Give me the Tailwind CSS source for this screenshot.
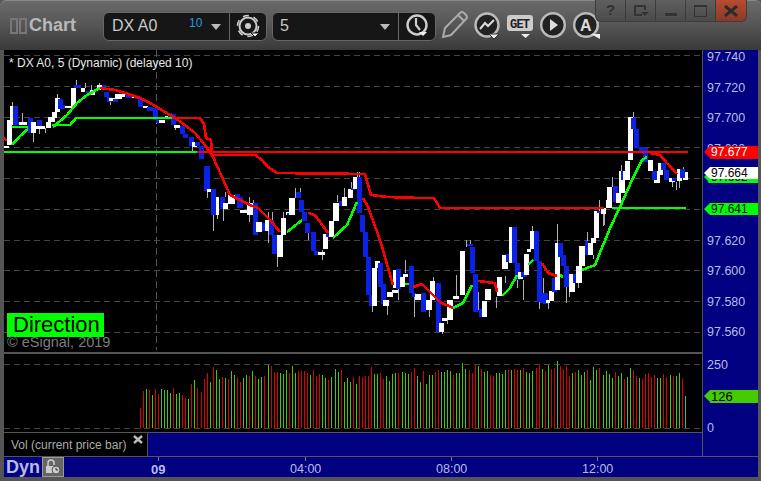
<!DOCTYPE html>
<html lang="en">
<head>
<meta charset="UTF-8">
<title>Chart</title>
<script src="https://cdn.jsdelivr.net/npm/@tailwindcss/browser@4"></script>
</head>
<body class="w-[761px] h-[481px] overflow-hidden bg-[#555] font-['Liberation_Sans',Arial,sans-serif]">

<!-- title bar and toolbar -->
<header class="relative h-[50px] rounded-t-md flex items-center bg-gradient-to-b from-[#6a6a6a] via-[#555] to-[#3a3a3a] border-t border-[#888]">
  <div class="flex gap-px ml-[10px] w-[17px] h-[16px] mt-[1px]">
    <span class="w-[8px] h-full border-2 border-[#777]"></span>
    <span class="w-[8px] h-full border-2 border-[#777]"></span>
  </div>
  <span class="ml-[2px] text-[18px] font-bold text-[#b8b8b8]">Chart</span>

  <div class="ml-[27px] flex w-[164px] h-[29px] mt-[1px] rounded-md border border-[#666] bg-[#161616]">
    <div class="relative flex-1 flex items-center pl-[8px] text-[16px] text-[#c8c8c8]">
      DX A0
      <span class="absolute left-[85px] top-[1px] text-[12px] text-[#1e9ce0]">10</span>
      <span class="absolute left-[107px] top-[11px] w-0 h-0 border-x-[5px] border-x-transparent border-t-[6px] border-t-[#bbb]"></span>
    </div>
    <div class="w-[37px] border-l border-[#666] flex items-center justify-center">
      <svg width="26" height="26" viewBox="0 0 26 26" fill="none">
        <circle cx="13" cy="13" r="8.500" stroke="#ccc" stroke-width="2"/>
        <circle cx="13" cy="13" r="10.500" stroke="#ccc" stroke-width="1.600" stroke-dasharray="6 5"/>
        <circle cx="13" cy="13" r="3" fill="#ccc"/>
        <path d="M16 20 h8 l-4 4 z" fill="#eee" stroke="#161616"/>
      </svg>
    </div>
  </div>

  <div class="ml-[5px] flex w-[164px] h-[29px] mt-[1px] rounded-md border border-[#666] bg-[#161616]">
    <div class="relative flex-1 flex items-center pl-[7px] text-[16px] text-[#c8c8c8]">
      5
      <span class="absolute left-[107px] top-[11px] w-0 h-0 border-x-[5px] border-x-transparent border-t-[6px] border-t-[#bbb]"></span>
    </div>
    <div class="w-[37px] border-l border-[#666] flex items-center justify-center">
      <svg width="26" height="26" viewBox="0 0 26 26" fill="none">
        <circle cx="13" cy="12" r="9.500" stroke="#ccc" stroke-width="2.400"/>
        <path d="M12 5 L12 12 L16 17" stroke="#ccc" stroke-width="2.200"/>
        <path d="M15 19 h8 l-4 4 z" fill="#eee"/>
      </svg>
    </div>
  </div>

  <!-- tool icons -->
  <svg class="ml-[5px] shrink-0" width="160" height="32" viewBox="0 0 160 32" fill="none">
    <path d="M2 27 L4 18 L19 3 Q21 1 23 3 L25 5 Q27 7 25 9 L10 25 Z M17 5 L23 11" stroke="#aaa" stroke-width="2"/>
    <circle cx="46" cy="15" r="11.500" fill="#222" stroke="#bbb" stroke-width="2.400"/>
    <path d="M39 19 L44 13 L47 16 L53 10" stroke="#ddd" stroke-width="2"/>
    <path d="M48 24 h10 l-5 5 z" fill="#eee" stroke="#333"/>
    <rect x="66" y="5" width="26" height="16" rx="3" fill="#ccc"/>
    <text x="69" y="18" font-size="12" font-weight="700" font-family="Liberation Mono" textLength="20" fill="#222">GET</text>
    <path d="M80 24 h9 l-4.500 4 z" fill="#eee"/>
    <circle cx="112" cy="15" r="11.800" fill="#222" stroke="#bbb" stroke-width="2.400"/>
    <path d="M109 9 L117 15 L109 21 Z" fill="#ddd"/>
    <circle cx="145" cy="15" r="11.800" fill="#222" stroke="#bbb" stroke-width="2.400"/>
    <text x="139" y="21" font-size="16" font-weight="700" font-family="Liberation Sans" fill="#ddd">A</text>
    <path d="M150 24 h9 v5 z" fill="#eee"/>
  </svg>

  <!-- window buttons -->
  <div class="absolute right-[14px] -top-px flex h-[22px] rounded-b-md overflow-hidden border border-[#3c3c3c] border-t-0 bg-gradient-to-b from-[#5f5f5f] to-[#4b4b4b]">
    <button class="w-[30px] flex items-center justify-center text-[15px] font-bold text-[#333] border-r border-[#3c3c3c]">?</button>
    <button class="w-[30px] flex items-center justify-center border-r border-[#3c3c3c]">
      <svg width="16" height="14" viewBox="0 0 16 14" fill="none"><path d="M9 11 H2 V2 H12 V6" stroke="#333" stroke-width="2"/><path d="M8 8 h8 l-4 4 z" fill="#333"/></svg>
    </button>
    <button class="w-[30px] flex items-end justify-center pb-[5px] border-r border-[#3c3c3c]"><span class="w-[12px] h-[3px] bg-[#333]"></span></button>
    <button class="w-[30px] flex items-center justify-center border-r border-[#3c3c3c]"><span class="w-[13px] h-[12px] border border-t-2 border-[#333]"></span></button>
    <button class="w-[30px] flex items-center justify-center bg-gradient-to-b from-[#b84c32] to-[#8a3a28]">
      <svg width="14" height="12" viewBox="0 0 14 12"><path d="M1 1 L13 11 M13 1 L1 11" stroke="#2b2b2b" stroke-width="3"/></svg>
    </button>
  </div>
</header>

<div class="flex pl-[4px] pr-[3px]">
  <!-- chart column -->
  <div class="w-[698px]">
    <div class="relative h-[302px] bg-black">
      <svg id="price" class="absolute inset-0" width="698" height="302" viewBox="4 50 698 302"></svg>
      <p class="absolute left-[5px] top-[5px] text-[12px] leading-[14px] text-[#e8e8e8] translate-y-px">* DX A0, 5 (Dynamic) (delayed 10)</p>
      <div class="absolute left-[3px] top-[263px] w-[97px] h-[24px] bg-[#00ff00] text-black text-[22px] leading-[24px] pl-[6px]">Direction</div>
      <p class="absolute left-[3px] top-[284px] text-[14.5px] leading-[16px] text-[#7c7c7c]">© eSignal, 2019</p>
    </div>
    <div class="h-[2px] bg-[#555]"></div>
    <svg id="volume" class="block bg-black" width="698" height="78" viewBox="4 354 698 78"></svg>
    <div class="h-[1px] bg-[#555]"></div>
    <div class="flex h-[23px] bg-black">
      <div class="relative w-[143px] text-[12px] leading-[23px] pl-[7px] pt-[1px] text-[#aaa]">
        Vol (current price bar)
        <svg class="absolute right-[4px] top-[2px]" width="10" height="9" viewBox="0 0 10 9"><path d="M1 1 L9 8 M9 1 L1 8" stroke="#bbb" stroke-width="2.400"/></svg>
      </div>
      <div class="flex-1 bg-[#000080] border-l border-[#555]"></div>
    </div>
  </div>

  <!-- price axis -->
  <div class="relative w-[56px] h-[406px] bg-[#000080] border-l border-[#555] text-[12.5px] text-[#b9bbe6]">
    <div class="pl-[4px]">
      <div class="h-[30.6px] leading-[15px]">97.740</div>
      <div class="h-[30.6px] leading-[15px]">97.720</div>
      <div class="h-[30.6px] leading-[15px]">97.700</div>
      <div class="h-[30.6px] leading-[15px]">97.680</div>
      <div class="h-[30.6px] leading-[15px]">97.660</div>
      <div class="h-[30.6px] leading-[15px]">97.640</div>
      <div class="h-[30.6px] leading-[15px]">97.620</div>
      <div class="h-[30.6px] leading-[15px]">97.600</div>
      <div class="h-[30.6px] leading-[15px]">97.580</div>
      <div class="h-[30.6px] leading-[15px]">97.560</div>
    </div>
    <!-- current value tags -->
    <div class="absolute left-[1px] top-[121px] flex h-[12px] w-[54px]">
      <span class="w-0 h-0 border-y-[6px] border-y-transparent border-r-[6px] border-r-[#00ff00]"></span>
      <span class="flex-1 bg-[#00ff00] text-black text-[12px] leading-[12px] pl-[1px]">97.662</span>
    </div>
    <div class="absolute left-[1px] top-[96px] flex h-[13px] w-[54px]">
      <span class="w-0 h-0 border-y-[6.500px] border-y-transparent border-r-[6px] border-r-[#ff0000]"></span>
      <span class="flex-1 bg-[#ff0000] text-white text-[12px] leading-[13px] pl-[1px]">97.677</span>
    </div>
    <div class="absolute left-[1px] top-[117px] flex h-[12px] w-[54px]">
      <span class="w-0 h-0 border-y-[6px] border-y-transparent border-r-[6px] border-r-white"></span>
      <span class="flex-1 bg-white text-black text-[12px] leading-[12px] pl-[1px]">97.664</span>
    </div>
    <div class="absolute left-[1px] top-[153px] flex h-[12px] w-[54px]">
      <span class="w-0 h-0 border-y-[6px] border-y-transparent border-r-[6px] border-r-[#00ff00]"></span>
      <span class="flex-1 bg-[#00ff00] text-black text-[12px] leading-[12px] pl-[1px]">97.641</span>
    </div>
    <span class="absolute left-[4px] top-[306px]">250</span>
    <div class="absolute left-[1px] top-[340px] flex h-[13px] w-[54px]">
      <span class="w-0 h-0 border-y-[6.500px] border-y-transparent border-r-[6px] border-r-[#44cc00]"></span>
      <span class="flex-1 bg-[#44cc00] text-black text-[13px] leading-[13px] pl-[1px]">126</span>
    </div>
    <span class="absolute left-[4px] top-[369px]">0</span>
  </div>
</div>

<!-- time axis -->
<footer class="relative ml-[4px] mr-[3px] h-[21px] bg-[#000080] border-t border-[#555] text-[12.5px] text-[#b9bbe6]">
  <span class="absolute left-[2px] top-[1px] text-[18px] leading-[18px] font-bold">Dyn</span>
  <span class="absolute left-[38px] top-0 w-[22px] h-[20px] bg-[#666] border border-[#999] flex items-center justify-center">
    <svg width="16" height="16" viewBox="0 0 16 16" fill="none">
      <path d="M3 8 V4 Q3 1 6 1 Q9 1 9 4 V6" stroke="#ccc" stroke-width="1.500"/>
      <rect x="1" y="7" width="8" height="7" fill="#ccc"/>
      <circle cx="11" cy="11" r="4" fill="#ccc" stroke="#555"/>
      <path d="M11 9 V11 H13" stroke="#333"/>
    </svg>
  </span>
  <span class="absolute left-[147px] top-[3px] font-bold text-[13px]">09</span>
  <span class="absolute left-[154px] top-0 w-px h-[4px] bg-[#777]"></span>
  <span class="absolute left-[286px] top-[3px]">04:00</span>
  <span class="absolute left-[301px] top-0 w-px h-[4px] bg-[#777]"></span>
  <span class="absolute left-[432px] top-[3px]">08:00</span>
  <span class="absolute left-[447px] top-0 w-px h-[4px] bg-[#777]"></span>
  <span class="absolute left-[578px] top-[3px]">12:00</span>
  <span class="absolute left-[593px] top-0 w-px h-[4px] bg-[#777]"></span>
</footer>

<script>
const NS = "http://www.w3.org/2000/svg";
const price = document.getElementById("price");
const volume = document.getElementById("volume");

function el(parent, name, attrs) {
  const node = document.createElementNS(NS, name);
  for (const k in attrs) node.setAttribute(k, attrs[k]);
  parent.appendChild(node);
}

// grid
[55, 86, 117, 147, 178, 209, 240, 270, 301, 332].forEach(y =>
  el(price, "path", { d: `M4 ${y + .5}H702`, stroke: "#444", "stroke-dasharray": "6 4" }));
el(price, "path", { d: "M156.500 50V350", stroke: "#555", "stroke-dasharray": "7 4" });
[364, 428].forEach(y =>
  el(volume, "path", { d: `M4 ${y + .5}H702`, stroke: "#444", "stroke-dasharray": "6 4" }));

// wicks: x, top, bottom
const wicks = [[12,102,106],[22,113,122],[33,133,142],[39,126,134],[45,128,133],[57,94,98],[76,80,86],[85,83,88],[91,85,90],[99,83,86],[110,102,105],
[156,120,124],[175,125,130],[192,145,152],[207,191,198],[213,215,231],[217,215,219],[223,209,221],[225,192,197],[249,197,222],[253,200,203],[268,212,243],[272,212,220],
[277,257,267],[283,212,218],[295,188,198],[300,188,192],[308,233,240],[322,250,260],[344,188,197],[337,195,202],[351,182,189],[357,172,177],[359,172,177],
[372,305,312],[387,305,315],[398,288,300],[405,260,273],[414,293,317],[429,310,317],[433,277,281],[442,332,334],[447,318,324],[456,275,296],[466,240,247],[470,240,246],
[478,292,310],[496,297,308],[505,276,283],[517,280,288],[523,280,300],[532,226,231],[539,302,309],[543,278,293],[548,303,309],[557,224,243],[566,287,303],[569,287,297],
[578,283,288],[587,232,241],[593,255,259],[603,214,226],[599,200,212],[604,214,225],[612,177,187],[621,165,171],[633,112,117],[672,182,187],[676,182,190],[679,180,188],[683,167,171]];
wicks.forEach(w => el(price, "rect", { x: w[0], y: w[1], width: 1, height: w[2] - w[1], fill: "#b0b0b0", "shape-rendering": "crispEdges" }));

// candles are read off in 3x crops: origin x, origin y, then x0 x1 y0 y1 colour
const W = "#fff", B = "#0a22e8";
function candles(ox, oy, rows) {
  rows.forEach(r => {
    const x = Math.round(ox + r[0] / 3), y = Math.round(oy + r[2] / 3);
    el(price, "rect", { x, y, width: Math.max(1, Math.round(ox + r[1] / 3) - x), height: Math.max(1, Math.round(oy + r[3] / 3) - y),
      fill: r[4], "shape-rendering": "crispEdges" });
  });
}
candles(0, 80, [[12,28,197,203,W],[22,36,120,195,W],[30,40,78,135,W],[40,54,78,135,B],[48,60,125,135,B],[58,80,125,135,W],[84,100,113,158,B],[92,108,125,160,W],
[110,126,120,138,B],[100,135,138,146,W],[138,152,125,145,W],[145,165,112,125,W],[155,170,95,115,W],[165,180,55,95,W],[175,190,58,88,B],[185,195,75,88,B],[195,215,78,85,W],[212,228,24,78,W],
[222,243,15,24,B],[243,255,25,35,W],[258,270,33,40,B],[270,285,30,45,W],[292,305,15,30,W],[305,317,15,28,B],[312,328,35,50,B],[322,336,50,65,B],[328,345,55,62,W],[340,355,58,65,B],[345,365,42,58,W],
[365,375,42,50,W],[378,395,42,55,B],[395,405,50,55,W],[405,420,50,58,B],[415,430,58,82,B],[430,445,78,85,W],[442,458,82,92,B],[460,475,85,120,B],[467,477,120,130,B],[477,495,120,128,W],[495,510,108,116,W],
[503,515,100,115,B],[513,527,102,135,B],[522,540,135,145,W],[540,555,138,162,B],[550,565,162,175,B],[567,582,172,198,B],[575,590,185,200,W],[586,600,185,198,B],[597,612,198,238,B],[612,630,258,332,B],
[622,632,328,335,W],[642,658,352,405,W],[633,648,328,405,B],[660,675,352,388,B],[668,685,368,388,W],[685,705,345,372,W],[705,720,342,352,B],[712,730,352,385,B],[720,742,390,398,W]]);
candles(250, 160, [[-8,8,130,165,W],[8,24,128,225,B],[18,36,185,215,W],[35,45,190,212,B],[45,58,180,212,W],[56,72,180,225,B],[65,82,225,282,B],[82,98,225,290,W],[93,108,175,225,W],[108,118,155,165,W],[110,122,160,165,B],
[118,135,115,165,W],[138,152,97,113,B],[147,162,120,155,B],[155,170,155,183,B],[165,180,190,220,B],[183,198,217,272,B],[193,208,272,285,B],[205,225,275,285,W],[218,234,222,268,W],[227,237,222,232,B],[237,252,183,232,W],
[250,266,128,183,W],[266,275,122,138,B],[275,292,112,138,W],[293,310,88,115,W],[303,315,85,90,B],[310,325,50,88,W],[320,336,52,160,B],[330,345,165,215,B],[338,353,215,290,B],[348,363,292,405,B],[357,367,405,437,B],
[365,381,325,437,W],[375,390,302,325,W],[384,400,310,380,B],[393,408,372,432,B],[400,418,420,437,W],[410,428,395,412,W],[425,445,390,398,W],[428,440,330,385,W],[438,453,328,387,B],[450,465,352,380,W],[458,475,342,350,W],
[477,492,318,400,B],[487,498,400,412,B],[495,512,403,420,W],[513,528,400,455,B],[528,545,420,450,W],[540,556,362,420,W],[558,574,368,515,B],[566,582,488,515,W],[575,590,475,482,W],[592,608,420,480,W],[608,628,408,418,W],
[630,645,272,405,W],[652,668,252,258,B],[660,676,262,340,B],[668,684,342,455,B],[686,696,447,470,B],[695,710,423,470,W],[705,722,388,420,W]]);
candles(420, 200, [[232,246,232,288,W],[246,264,165,208,W],[258,268,162,185,B],[268,278,82,190,W],[276,292,82,190,B],[285,300,190,240,B],[293,310,215,238,W],[303,320,215,230,B],[312,328,162,225,W],[322,333,148,155,W],
[330,345,93,148,W],[343,357,93,182,B],[351,367,182,305,B],[360,372,280,310,B],[370,385,280,312,B],[378,390,300,310,W],[387,402,272,303,W],[396,412,235,275,B],[405,420,128,270,W],[414,430,128,170,B],[422,438,165,198,B],
[432,448,198,262,B],[448,465,222,275,W],[460,470,222,248,B],[468,485,198,248,W],[478,495,138,198,W],[495,505,122,165,B],[505,520,128,165,W],[513,528,115,128,W],[522,537,33,115,W],[530,542,33,38,B],[543,558,28,42,W],[558,575,0,25,W]]);
candles(560, 100, [[122,138,325,342,W],[140,157,262,325,W],[158,175,258,305,B],[168,183,278,308,W],[178,194,212,278,W],[183,190,212,240,B],[194,210,182,240,W],[205,220,50,180,W],[213,228,55,88,B],[222,237,88,143,B],[237,255,140,152,B],
[248,263,143,185,B],[265,280,180,212,W],[283,300,212,248,W],[275,290,212,240,B],[295,308,188,225,W],[303,318,188,210,B],[311,327,210,240,B],[327,345,235,245,W],[335,348,233,243,B],[352,365,208,242,W],[368,383,215,240,W],[360,375,208,235,B]]);

// indicator lines
const RED = "#ff0000", GREEN = "#00ff00";
function line(pts, stroke) {
  el(price, "polyline", { points: pts, stroke, fill: "none", "stroke-width": 2.6, "stroke-linejoin": "round", "shape-rendering": "crispEdges" });
}
line("4,152 197,152", GREEN);
line("197,152 688,152", RED);
line("12,127 28,127", GREEN);
line("52,125 70,125 76,118 172,118", GREEN);
line("172,118 200,118 204,124 206,138 211,140 212,155 255,155 262,160 268,167 277,173 365,174 371,195 387,197 420,198 434,198 440,208 604,208", RED);
line("612,208 686,208", GREEN);
line("4,138 7,141", RED);
line("12,145 20,136 28,129", GREEN);
line("53,127 67,115 77,103 87,95 100,88", GREEN);
line("100,88 115,90 125,93 140,98 150,103 165,112 175,118 185,125 195,133 205,145 213,157 230,195 250,205 258,208 270,220 280,232", RED);
line("287,232 302,220", GREEN);
line("308,213 315,215 328,233", RED);
line("333,238 347,225 357,202", GREEN);
line("363,198 368,207 380,240 393,285", RED);
line("405,284 409,284", GREEN);
line("413,287 422,284 430,292 440,302 453,308", RED);
line("453,308 463,303 472,285", GREEN);
line("478,281 495,283 497,292", RED);
line("502,296 510,288 517,275", GREEN);
line("528,265 533,260", GREEN);
line("542,263 548,273 557,276", RED);
line("560,275 563,277", GREEN);
line("582,270 595,265 610,228 620,207 632,180 642,160 647,157", GREEN);
line("650,153 660,155 667,163 677,174", RED);

// volume bars, same crop readings: x, top, colour (1 = red)
function bars(ox, oy, rows) {
  rows.forEach(r => el(volume, "rect", { x: Math.round(ox + r[0] / 3), y: Math.round(oy + r[1] / 3), width: 1, height: 428 - Math.round(oy + r[1] / 3),
    fill: r[2] ? "#e00000" : "#44cc00", "shape-rendering": "crispEdges" }));
}
bars(0, 300, [[421,323,1],[430,273,1],[438,267,0],[448,270,1],[457,285,0],[466,267,1],[475,282,1],[484,267,0],[493,270,0],[502,270,0],[511,278,0],[520,264,1],[529,282,0],[538,279,0],[547,285,1],[556,294,1],[565,297,0],[574,252,1],[583,240,0],[592,264,1],[604,276,1],[613,237,1],[622,219,1],[631,246,0],[640,201,1],[649,210,0],[658,237,0],[667,231,1],[676,234,0],[685,237,1],[694,213,0],[703,225,0],[712,231,1],[721,246,1],[730,234,0],[739,225,0],[748,228,1],[757,213,0]]);
bars(255, 355, [[1,63,1],[10,72,0],[19,66,0],[28,63,1],[40,30,0],[49,33,1],[58,51,1],[67,51,1],[76,54,0],[85,57,0],[94,45,0],[103,54,1],[112,33,0],[121,54,0],[130,48,1],[139,48,1],[148,48,1],[157,54,1],[166,60,0],[175,45,1],[184,63,1],[193,57,1],[202,60,0],[211,69,0],[220,75,1],[229,66,0],[241,42,0],[250,51,0],[259,45,1],[268,81,0],[277,69,0],[286,81,0],[295,66,1],[304,87,0],[313,63,1],[322,66,1],[331,63,1],[340,63,1],[349,36,1],[358,57,0],[367,57,0],[376,54,1],[385,72,1],[394,63,0],[403,78,0],[412,57,0],[421,54,0],[430,54,1],[442,51,0],[451,54,0],[460,57,0],[469,51,1],[478,39,1],[487,63,0],[496,81,0],[505,48,1],[514,87,0],[523,60,0],[532,60,0],[541,51,1],[550,45,1],[559,51,0],[568,51,0],[577,45,0],[586,48,0],[595,60,1],[604,54,0],[613,54,0],[622,24,0],[631,42,0],[643,45,1],[652,54,1],[661,30,1],[670,33,0],[679,42,1],[688,51,0],[697,48,0],[706,60,1],[715,63,1],[724,54,0],[733,54,0]]);
bars(500, 340, [[7,102,0],[16,90,0],[25,90,1],[34,90,0],[43,87,1],[52,90,1],[61,90,0],[70,84,1],[79,96,0],[88,99,0],[97,93,0],[109,84,1],[118,75,1],[127,87,0],[136,93,1],[145,75,0],[154,87,1],[163,84,1],[172,63,0],[181,78,1],[190,87,1],[199,78,1],[208,108,1],[217,99,0],[226,96,1],[235,90,0],[244,105,0],[253,96,0],[262,90,1],[271,120,0],[280,81,0],[289,90,0],[298,84,1],[310,105,0],[319,93,0],[328,102,0],[337,114,0],[346,96,1],[355,108,0],[364,99,0],[373,117,1],[382,111,0],[391,84,0],[400,90,1],[409,108,1],[418,114,0],[427,117,1],[436,102,1],[445,99,1],[454,111,1],[463,105,1],[472,114,0],[481,114,0],[490,102,1],[499,111,1],[511,105,0],[520,108,1],[529,108,0],[538,99,0],[547,117,1],[556,168,0]]);
</script>
</body>
</html>
